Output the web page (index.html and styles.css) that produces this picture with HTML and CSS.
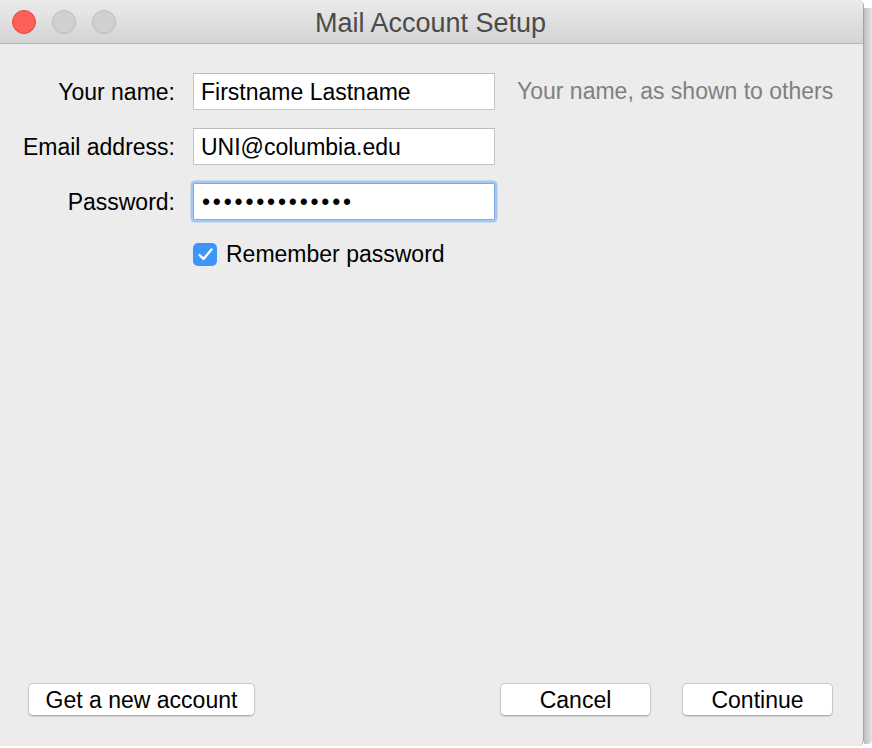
FILE: index.html
```html
<!DOCTYPE html>
<html>
<head>
<meta charset="utf-8">
<link rel="stylesheet" href="styles.css">
</head>
<body>
<div class="screen">
  <div class="window">
    <div class="titlebar">
      <div class="lights">
        <span class="light close"></span>
        <span class="light"></span>
        <span class="light"></span>
      </div>
      <div class="title">Mail Account Setup</div>
    </div>
    <div class="content">
      <div class="form">
        <div class="label">Your name:</div>
        <div class="field">Firstname Lastname</div>
        <div class="hint">Your name, as shown to others</div>

        <div class="label">Email address:</div>
        <div class="field">UNI@columbia.edu</div>
        <div></div>

        <div class="label">Password:</div>
        <div class="field focused"><span class="dots">••••••••••••••</span></div>
        <div></div>

        <div></div>
        <div class="check-row">
          <span class="checkbox">
            <svg width="17" height="15" viewBox="0 0 17 15"><path d="M2.5 8 L6.5 12 L14.5 2.5" fill="none" stroke="#fff" stroke-width="2.3" stroke-linecap="round" stroke-linejoin="round"/></svg>
          </span>
          <span class="check-label">Remember password</span>
        </div>
        <div></div>
      </div>
      <div class="footer">
        <button class="btn btn-wide">Get a new account</button>
        <div class="right-btns">
          <button class="btn">Cancel</button>
          <button class="btn">Continue</button>
        </div>
      </div>
    </div>
  </div>
  <div class="shadow"></div>
</div>
</body>
</html>
```
FILE: styles.css
```css
* { box-sizing: border-box; }
html, body {
  margin: 0;
  padding: 0;
  background: #ffffff;
}
body {
  font-family: "Liberation Sans", Arial, sans-serif;
  width: 872px;
  height: 748px;
  overflow: hidden;
}
.screen {
  display: flex;
  width: 872px;
  height: 748px;
}
.window {
  width: 864px;
  height: 746px;
  display: flex;
  flex-direction: column;
  background: #ececec;
  border-right: 1px solid #a4a4a4;
  border-radius: 0 6px 6px 0;
  overflow: hidden;
}
.shadow {
  width: 8px;
  margin-top: 8px;
  height: 736px;
  background: linear-gradient(to right, #bdbdbd, #d6d6d6 60%, #e4e4e4);
  border-radius: 0 0 4px 0;
}
.titlebar {
  height: 44px;
  flex: none;
  position: relative;
  background: linear-gradient(to bottom, #ebebeb, #d4d4d4);
  border-bottom: 1px solid #b7b7b7;
  display: flex;
  align-items: center;
  justify-content: center;
}
.lights {
  position: absolute;
  left: 12px;
  top: 10px;
  display: flex;
  gap: 16px;
}
.light {
  width: 24px;
  height: 24px;
  border-radius: 50%;
  background: #d0d0d0;
  border: 1px solid #bdbdbd;
}
.light.close {
  background: #fc605b;
  border-color: #e3473f;
}
.title {
  font-size: 27px;
  color: #4b4b4b;
  margin-left: -2px;
  margin-top: 3px;
}
.content {
  flex: 1;
  display: flex;
  flex-direction: column;
  justify-content: space-between;
  padding: 29px 31px 30px 0;
}
.form {
  display: grid;
  grid-template-columns: 193px 302px auto;
  row-gap: 18px;
  align-items: center;
}
.label {
  font-size: 23px;
  color: #000;
  text-align: right;
  padding-right: 18px;
  white-space: nowrap;
  margin-top: 2px;
}
.field {
  height: 37px;
  background: #fff;
  border: 1px solid #c6c6c6;
  border-top-color: #bcbcbc;
  font-size: 23px;
  color: #000;
  padding: 2px 7px 0;
  display: flex;
  align-items: center;
  white-space: nowrap;
}
.field.focused {
  border-color: #7eaae8;
  box-shadow: 0 0 0 2.5px #a6c7f1;
  border-radius: 2px;
}
.dots {
  font-size: 23px;
  letter-spacing: 2.8px;
  margin-left: 1px;
}
.hint {
  font-size: 23px;
  color: #808080;
  padding-left: 22px;
  white-space: nowrap;
}
.check-row {
  display: flex;
  align-items: center;
  gap: 9px;
  margin-top: 3px;
}
.checkbox {
  width: 24px;
  height: 23px;
  border-radius: 5px;
  background: #3b96f8;
  display: flex;
  align-items: center;
  justify-content: center;
}
.check-label {
  font-size: 23px;
  color: #000;
}
.footer {
  display: flex;
  justify-content: space-between;
  align-items: center;
  padding-left: 28px;
}
.right-btns {
  display: flex;
  gap: 31px;
  margin-right: -1px;
}
.btn {
  font-family: "Liberation Sans", Arial, sans-serif;
  font-size: 23px;
  color: #000;
  background: #fff;
  border: 1px solid #c8c8c8;
  border-bottom-color: #b0b0b0;
  border-radius: 5px;
  height: 33px;
  width: 151px;
  padding: 2px 0 0;
  box-shadow: 0 1px 1px rgba(0,0,0,0.12);
  display: flex;
  align-items: center;
  justify-content: center;
}
.btn-wide { width: 227px; }
```
